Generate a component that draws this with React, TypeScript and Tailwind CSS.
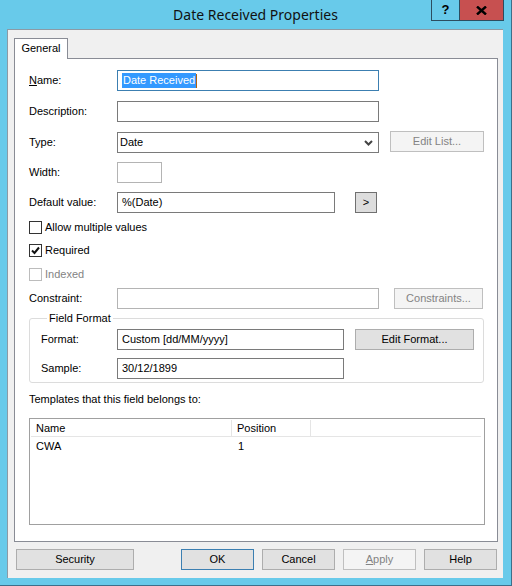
import React from "react";

const font = { fontFamily: '"Liberation Sans", Arial, sans-serif' };

const Input = ({
  w,
  text,
  border = "border-[#7a7a7a]",
  selected,
}: {
  w: string;
  text?: string;
  border?: string;
  selected?: boolean;
}) => (
  <div className={`${w} h-[21px] border ${border} bg-white flex items-center pl-[4px] text-[11px] text-black`}>
    {selected ? (
      <>
        <span className="bg-[#3399ff] text-white px-[1px] leading-[15px]">{text}</span>
        <span className="w-[1px] h-[14px] bg-[#b06010]" />
      </>
    ) : (
      text
    )}
  </div>
);

const Button = ({
  w,
  children,
  variant = "normal",
}: {
  w: string;
  children: React.ReactNode;
  variant?: "normal" | "default" | "disabled";
}) => {
  const cls =
    variant === "disabled"
      ? "bg-[#f4f4f4] border-[#bfbfbf] text-[#838383]"
      : variant === "default"
      ? "bg-[#e1e1e1] border-[#3c7fb1] text-black"
      : "bg-[#e1e1e1] border-[#adadad] text-black";
  return (
    <div className={`${w} h-[21px] border ${cls} flex items-center justify-center text-[11px] shrink-0`}>
      {children}
    </div>
  );
};

const Check = ({ label, checked, disabled }: { label: string; checked?: boolean; disabled?: boolean }) => (
  <div className="flex items-center h-[13px]">
    <div
      className={`w-[13px] h-[13px] border ${disabled ? "border-[#bcbcbc]" : "border-[#333333]"} bg-white flex items-center justify-center`}
    >
      {checked && (
        <svg width="9" height="9" viewBox="0 0 9 9">
          <path d="M1 4.5 L3.5 7 L8 1.5" fill="none" stroke="#111" strokeWidth="2" />
        </svg>
      )}
    </div>
    <span className={`ml-[3px] text-[11px] ${disabled ? "text-[#838383]" : "text-black"}`}>{label}</span>
  </div>
);

const Label = ({ children, w = "w-[88px]" }: { children: React.ReactNode; w?: string }) => (
  <div className={`${w} shrink-0 text-[11px] text-black`}>{children}</div>
);

export default function App() {
  return (
    <div style={font} className="w-[512px] h-[586px] bg-[#68caea] border-r border-b border-[#3d6f8a] overflow-hidden">
      {/* title bar */}
      <div className="flex h-[29px]">
        <div className="w-[80px]" />
        <div
          className="flex-1 flex items-center justify-center text-[14px] text-[#111] pb-[1px]"
          style={{ fontFamily: '"Noto Sans", "Open Sans", sans-serif' }}
        >
          Date Received Properties
        </div>
        <div className="w-[80px] flex items-start">
          <div className="w-[28px] h-[21px] border-l border-b border-[#2c4d60] flex items-center justify-center text-[13px] font-bold text-black">
            ?
          </div>
          <div className="w-[45px] h-[21px] bg-[#c75050] border-l border-r border-b border-[#2c4d60] flex items-center justify-center">
            <svg width="11" height="9" viewBox="0 0 11 9">
              <path d="M1 0.5 L10 8.5 M10 0.5 L1 8.5" stroke="#000" strokeWidth="2.4" />
            </svg>
          </div>
        </div>
      </div>

      {/* client area */}
      <div className="ml-[7px] w-[496px] h-[549px] bg-[#f0f0f0] border-l border-t border-[#8c9aa5]">
        <div className="pl-[6px] pt-[8px] flex">
          <div className="relative z-10 w-[54px] h-[21px] -mb-[1px] bg-white border-l border-t border-r border-[#898c95] flex items-center justify-center text-[11px] text-black pb-[1px]">
            General
          </div>
        </div>

        {/* tab panel */}
        <div className="ml-[6px] w-[484px] h-[484px] bg-white border border-[#898c95] pl-[14px] pt-[11px]">
          <div className="flex items-center h-[21px]">
            <Label>
              <span className="underline">N</span>ame:
            </Label>
            <Input w="w-[262px]" text="Date Received" border="border-[#3c7fb1]" selected />
          </div>

          <div className="flex items-center h-[21px] mt-[10px]">
            <Label>Description:</Label>
            <Input w="w-[262px]" />
          </div>

          <div className="flex items-center h-[21px] mt-[10px]">
            <Label>Type:</Label>
            <div className="w-[262px] h-[21px] border border-[#7a7a7a] bg-white flex items-center justify-between pl-[2px] pr-[5px] text-[11px]">
              <span>Date</span>
              <svg width="9" height="6" viewBox="0 0 9 6">
                <path d="M1 1 L4.5 4.5 L8 1" fill="none" stroke="#444" strokeWidth="2" />
              </svg>
            </div>
            <div className="ml-[11px] -mt-[2px]">
              <Button w="w-[94px]" variant="disabled">
                Edit List...
              </Button>
            </div>
          </div>

          <div className="flex items-center h-[21px] mt-[9px]">
            <Label>Width:</Label>
            <Input w="w-[45px]" border="border-[#b4b4b4]" />
          </div>

          <div className="flex items-center h-[21px] mt-[9px]">
            <Label>Default value:</Label>
            <Input w="w-[218px]" text="%(Date)" />
            <div className="ml-[20px]">
              <div className="w-[22px] h-[21px] bg-[#dddddd] border border-[#707070] flex items-center justify-center text-[11px]">
                &gt;
              </div>
            </div>
          </div>

          <div className="mt-[8px]">
            <Check label="Allow multiple values" />
          </div>
          <div className="mt-[10px]">
            <Check label="Required" checked />
          </div>
          <div className="mt-[11px]">
            <Check label="Indexed" disabled />
          </div>

          <div className="flex items-center h-[21px] mt-[7px]">
            <Label>Constraint:</Label>
            <Input w="w-[262px]" border="border-[#b4b4b4]" />
            <div className="ml-[15px]">
              <Button w="w-[89px]" variant="disabled">
                Constraints...
              </Button>
            </div>
          </div>

          {/* Field Format group */}
          <fieldset className="mt-[2px] w-[455px] border border-[#dcdcdc] rounded-[3px] pl-[11px] pb-[3px]">
            <legend className="ml-[6px] px-[2px] text-[11px] leading-[14px] text-black">Field Format</legend>
            <div className="flex items-center h-[21px] mt-[4px]">
              <Label w="w-[76px]">Format:</Label>
              <Input w="w-[227px]" text="Custom [dd/MM/yyyy]" />
              <div className="ml-[11px]">
                <Button w="w-[119px]">Edit Format...</Button>
              </div>
            </div>
            <div className="flex items-center h-[21px] mt-[8px]">
              <Label w="w-[76px]">Sample:</Label>
              <Input w="w-[227px]" text="30/12/1899" />
            </div>
          </fieldset>

          <div className="mt-[9px] text-[11px] leading-[14px] text-black">Templates that this field belongs to:</div>

          {/* list view */}
          <div className="mt-[12px] w-[456px] h-[107px] border border-[#a0a0a0] bg-white p-[1px] text-[11px]">
            <div className="flex h-[17px] border-b border-[#e5e5e5] mr-[2px]">
              <div className="w-[201px] border-r border-[#e5e5e5] pl-[5px] flex items-center">Name</div>
              <div className="w-[79px] border-r border-[#e5e5e5] pl-[5px] flex items-center">Position</div>
            </div>
            <div className="flex h-[18px] items-center">
              <div className="w-[201px] pl-[5px]">CWA</div>
              <div className="pl-[6px]">1</div>
            </div>
          </div>
        </div>

        {/* bottom buttons */}
        <div className="flex mt-[7px] pl-[8px]">
          <Button w="w-[118px]">Security</Button>
          <div className="ml-[47px] flex gap-[8px]">
            <Button w="w-[73px]" variant="default">
              OK
            </Button>
            <Button w="w-[73px]">Cancel</Button>
            <Button w="w-[73px]" variant="disabled">
              <span>
                <span className="underline">A</span>pply
              </span>
            </Button>
            <Button w="w-[73px]">Help</Button>
          </div>
        </div>
      </div>
    </div>
  );
}
